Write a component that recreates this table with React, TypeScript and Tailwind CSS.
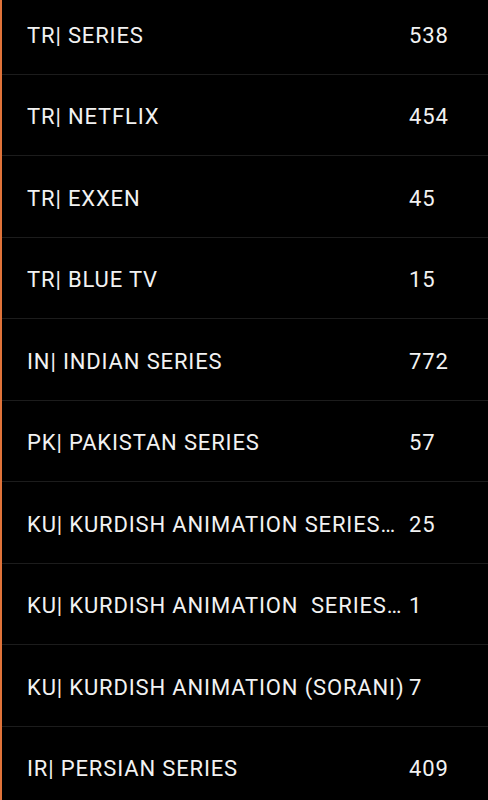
import React from "react";

const rows: [string, string][] = [
  ["TR| SERIES", "538"],
  ["TR| NETFLIX", "454"],
  ["TR| EXXEN", "45"],
  ["TR| BLUE TV", "15"],
  ["IN| INDIAN SERIES", "772"],
  ["PK| PAKISTAN SERIES", "57"],
  ["KU| KURDISH ANIMATION SERIES…", "25"],
  ["KU| KURDISH ANIMATION  SERIES…", "1"],
  ["KU| KURDISH ANIMATION (SORANI)", "7"],
  ["IR| PERSIAN SERIES", "409"],
];

export default function App() {
  return (
    <div
      className="w-[488px] h-[800px] overflow-hidden bg-black border-l-[2px] border-[#e0733a]"
      style={{ fontFamily: "Roboto, 'Liberation Sans', sans-serif" }}
    >
      <div className="-mt-[7px]">
        {rows.map(([name, count], i) => (
          <div
            key={i}
            className="h-[81.5px] flex items-center pl-[25px] pt-[4px] border-b border-[#1c1c1c] text-[22px] tracking-[0.85px] text-[#f2f2f2]"
          >
            <span className="w-[380px] truncate whitespace-pre">{name}</span>
            <span className="pl-[2px]">{count}</span>
          </div>
        ))}
      </div>
    </div>
  );
}
